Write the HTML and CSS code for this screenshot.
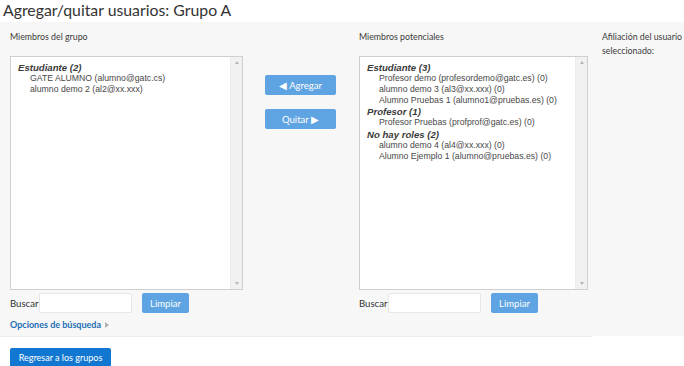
FILE: index.html
```html
<!DOCTYPE html>
<html lang="es">
<head>
<meta charset="utf-8">
<title>Agregar/quitar usuarios: Grupo A</title>
<link rel="stylesheet" href="styles.css">
</head>
<body>
<h2 class="title">Agregar/quitar usuarios: Grupo A</h2>
<div class="panel">
  <div class="grid">
    <div class="col">
      <div class="label">Miembros del grupo</div>
      <div class="listbox">
        <div class="items">
          <div class="grp">Estudiante (2)</div>
          <div class="opt">GATE ALUMNO (alumno@gatc.cs)</div>
          <div class="opt">alumno demo 2 (al2@xx.xxx)</div>
        </div>
        <div class="sbar"><span class="up"></span><span class="down"></span></div>
      </div>
      <div class="search">
        <span class="slabel">Buscar</span>
        <span class="input"></span>
        <span class="btn light">Limpiar</span>
      </div>
      <div class="opts">Opciones de búsqueda <span class="tri"></span></div>
    </div>
    <div class="mid">
      <span class="btn light wide">&#9664; Agregar</span>
      <span class="btn light wide">Quitar &#9654;</span>
    </div>
    <div class="col">
      <div class="label">Miembros potenciales</div>
      <div class="listbox">
        <div class="items">
          <div class="grp">Estudiante (3)</div>
          <div class="opt">Profesor demo (profesordemo@gatc.es) (0)</div>
          <div class="opt">alumno demo 3 (al3@xx.xxx) (0)</div>
          <div class="opt">Alumno Pruebas 1 (alumno1@pruebas.es) (0)</div>
          <div class="grp">Profesor (1)</div>
          <div class="opt">Profesor Pruebas (profprof@gatc.es) (0)</div>
          <div class="grp">No hay roles (2)</div>
          <div class="opt">alumno demo 4 (al4@xx.xxx) (0)</div>
          <div class="opt">Alumno Ejemplo 1 (alumno@pruebas.es) (0)</div>
        </div>
        <div class="sbar"><span class="up"></span><span class="down"></span></div>
      </div>
      <div class="search">
        <span class="slabel">Buscar</span>
        <span class="input"></span>
        <span class="btn light">Limpiar</span>
      </div>
    </div>
    <div class="aff">Afiliación del usuario<br>seleccionado:</div>
  </div>
</div>
<div class="footer">
  <span class="btn dark">Regresar a los grupos</span>
</div>
</body>
</html>
```
FILE: styles.css
```css
html, body {
  margin: 0;
  padding: 0;
  background: #ffffff;
  font-family: Lato, "Open Sans", sans-serif;
  color: #333333;
  overflow: hidden;
}
.title {
  margin: 0;
  padding: 0 0 0 3px;
  height: 22px;
  font-size: 15.8px;
  font-weight: 400;
  line-height: 20px;
  color: #333333;
}
.panel {
  background: #f7f7f7;
  height: 314px;
}
.grid {
  width: 684px;
  box-sizing: border-box;
  padding-left: 10px;
  display: grid;
  grid-template-columns: 233px 116px 229px 1fr;
  height: 314px;
}
.col {
  padding-top: 8px;
  display: flex;
  flex-direction: column;
}
.label {
  font-size: 8.8px;
  line-height: 14px;
  height: 14px;
  margin-bottom: 12px;
  color: #3a3a3a;
}
.listbox {
  height: 234px;
  box-sizing: border-box;
  border: 1px solid #cfcfcf;
  background: #ffffff;
  display: flex;
}
.items {
  flex: 1;
  padding: 5px 0 0 7px;
  font-family: "Liberation Sans", Arial, sans-serif;
  font-size: 8.7px;
  line-height: 11.1px;
  color: #484848;
  white-space: nowrap;
  overflow: hidden;
}
.grp {
  font-weight: bold;
  font-style: italic;
  font-size: 9.6px;
  color: #3a3a3a;
}
.opt {
  padding-left: 12px;
}
.sbar {
  width: 11px;
  background: #f1f1f1;
  border-left: 1px solid #ececec;
  display: flex;
  flex-direction: column;
  justify-content: space-between;
  align-items: center;
  padding: 4px 0;
}
.up, .down {
  width: 0;
  height: 0;
  border-left: 2px solid transparent;
  border-right: 2px solid transparent;
}
.up { border-bottom: 3px solid #b5b5b5; }
.down { border-top: 3px solid #b5b5b5; }
.search {
  display: flex;
  align-items: center;
  margin-top: 3px;
  height: 20px;
}
.slabel {
  font-size: 9.6px;
  width: 29px;
  color: #333;
}
.input {
  width: 93px;
  height: 20px;
  box-sizing: border-box;
  background: #ffffff;
  border: 1px solid #e6e6e6;
  border-radius: 2px;
  margin-right: 10px;
}
.btn {
  display: inline-flex;
  align-items: center;
  justify-content: center;
  height: 20px;
  box-sizing: border-box;
  border-radius: 2px;
  color: #ffffff;
  font-size: 9.5px;
  padding: 0 6px;
  white-space: nowrap;
}
.btn.light {
  background: #5ea3e2;
  width: 47px;
}
.btn.light.wide {
  width: 71px;
}
.btn.dark {
  background: #1177d1;
  width: 101px;
  height: 19px;
  font-size: 9px;
}
.mid {
  padding-top: 53px;
  padding-left: 22px;
  display: flex;
  flex-direction: column;
  gap: 14px;
}
.opts {
  margin-top: 6px;
  font-size: 9px;
  line-height: 12px;
  font-weight: bold;
  color: #1a6db5;
  display: flex;
  align-items: center;
  gap: 4px;
}
.tri {
  width: 0;
  height: 0;
  border-top: 3px solid transparent;
  border-bottom: 3px solid transparent;
  border-left: 4px solid #b0b0b0;
}
.aff {
  padding-top: 8px;
  padding-left: 14px;
  font-size: 8.8px;
  line-height: 14px;
  color: #3a3a3a;
  white-space: nowrap;
  overflow: hidden;
}
.footer {
  width: 592px;
  border-top: 1px solid #ececec;
  padding: 8px 0 0 10px;
  box-sizing: border-box;
}
```
